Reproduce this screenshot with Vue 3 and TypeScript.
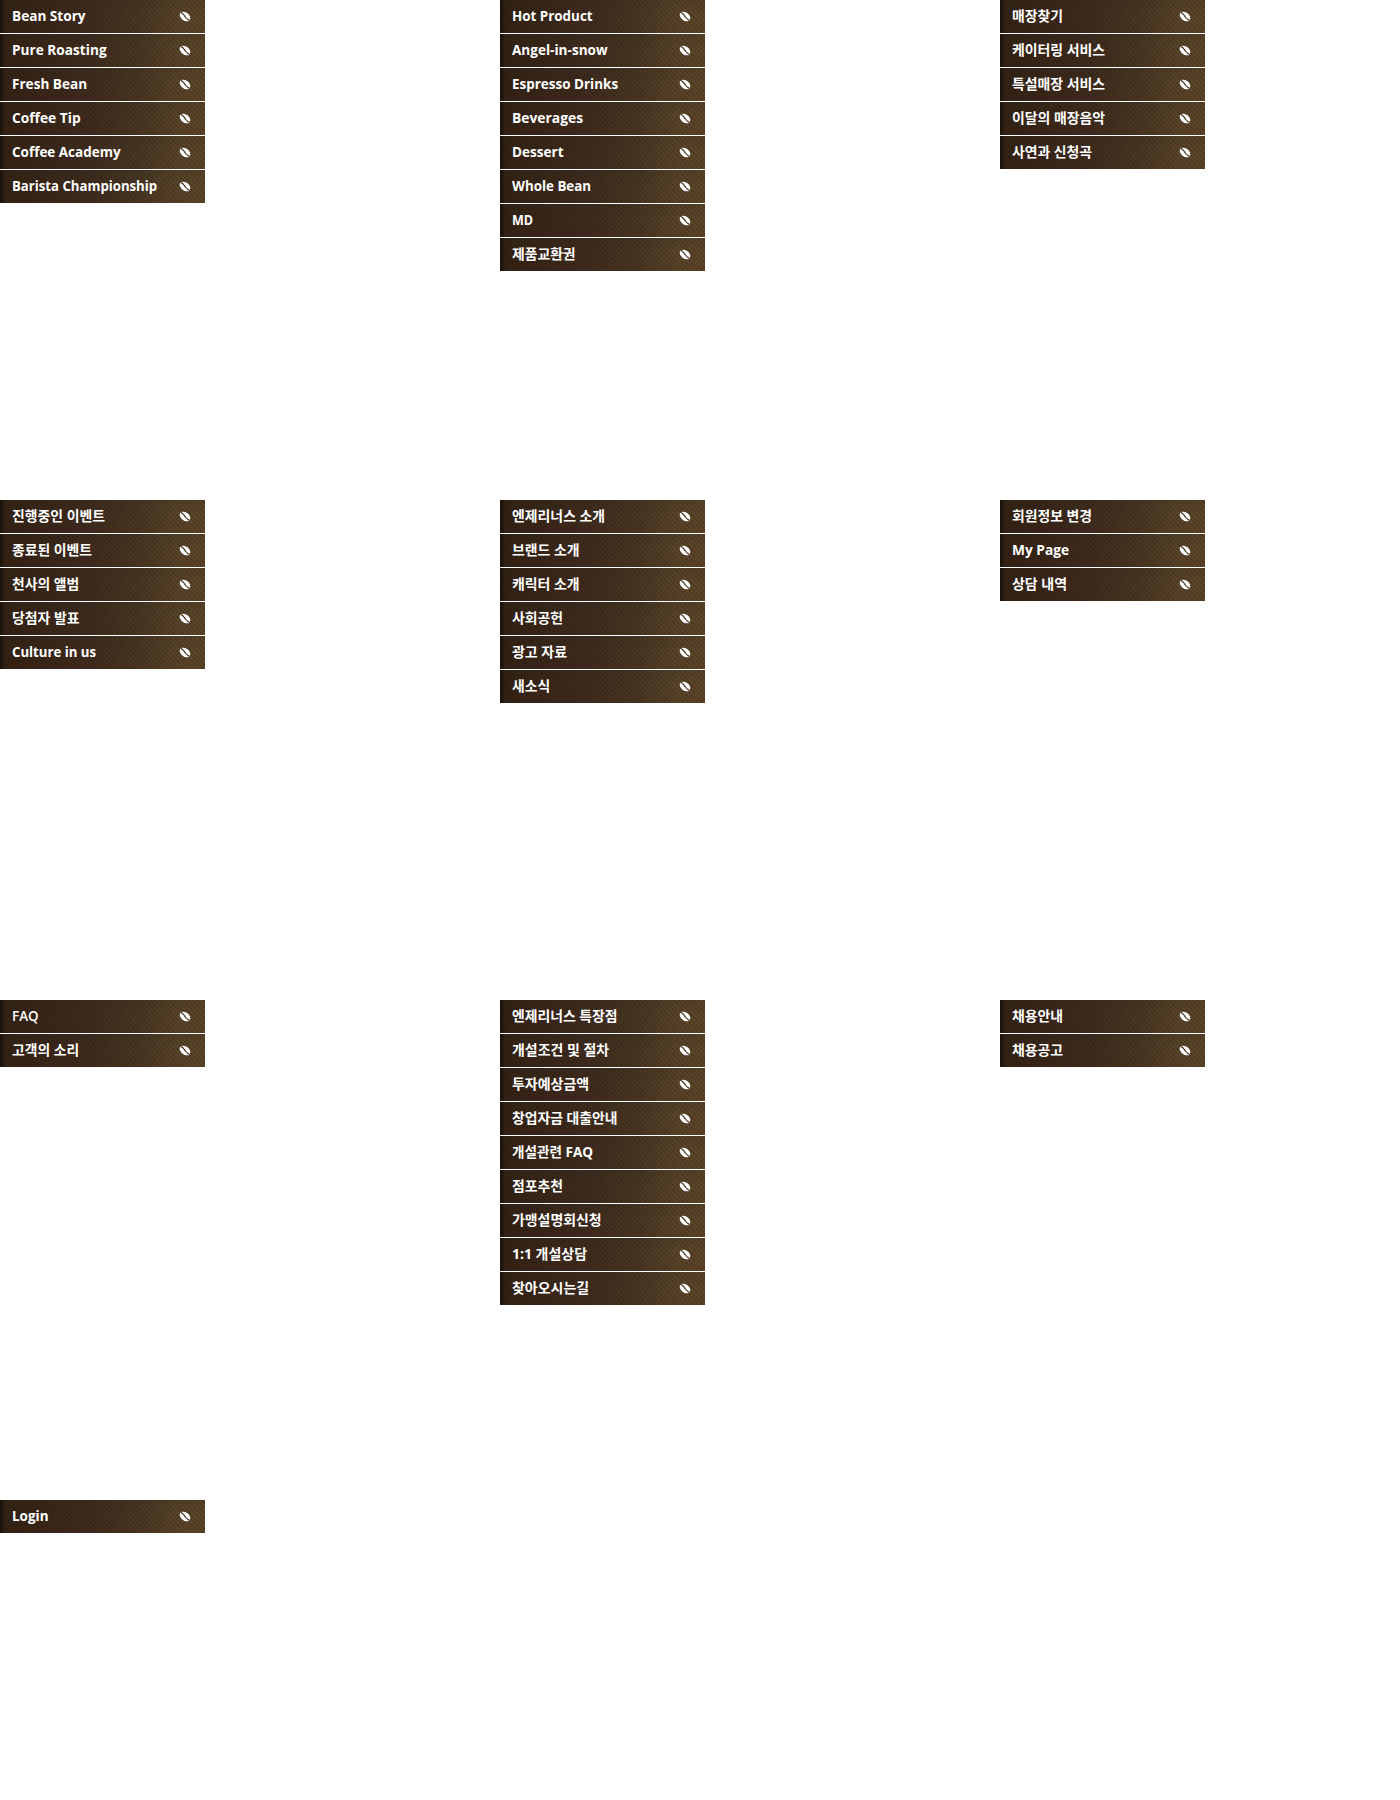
<script setup lang="ts">
interface Item {
  label: string
  width: number
}

const entry = (label: string, width: number): Item => ({ label, width })

const menus: Item[][] = [
  [
    entry('Bean Story', 73), entry('Pure Roasting', 94), entry('Fresh Bean', 74.5),
    entry('Coffee Tip', 68), entry('Coffee Academy', 108), entry('Barista Championship', 144.5),
  ],
  [
    entry('Hot Product', 80), entry('Angel-in-snow', 95), entry('Espresso Drinks', 105.5),
    entry('Beverages', 70.5), entry('Dessert', 51), entry('Whole Bean', 78.5),
    entry('MD', 20.5), entry('제품교환권', 63),
  ],
  [
    entry('매장찾기', 50.5), entry('케이터링 서비스', 92.5), entry('특설매장 서비스', 92.5),
    entry('이달의 매장음악', 92.5), entry('사연과 신청곡', 79.5),
  ],
  [
    entry('진행중인 이벤트', 92.5), entry('종료된 이벤트', 79.5), entry('천사의 앨범', 66.5),
    entry('당첨자 발표', 67), entry('Culture in us', 83.5),
  ],
  [
    entry('엔제리너스 소개', 92.5), entry('브랜드 소개', 67), entry('캐릭터 소개', 67),
    entry('사회공헌', 50.5), entry('광고 자료', 54.5), entry('새소식', 37.5),
  ],
  [entry('회원정보 변경', 79.5), entry('My Page', 56.5), entry('상담 내역', 54.5)],
  [entry('FAQ', 26), entry('고객의 소리', 66.5)],
  [
    entry('엔제리너스 특장점', 105), entry('개설조건 및 절차', 96.5), entry('투자예상금액', 76.5),
    entry('창업자금 대출안내', 105), entry('개설관련 FAQ', 80.5), entry('점포추천', 50.5),
    entry('가맹설명회신청', 89), entry('1:1 개설상담', 74.5), entry('찾아오시는길', 76.5),
  ],
  [entry('채용안내', 50.5), entry('채용공고', 50.5)],
  [entry('Login', 36)],
]

const face = (label: string) => {
  if (label === 'FAQ') return 'light'
  return /^[\x20-\x7e]+$/.test(label) ? 'latin' : 'hangul'
}
</script>

<template>
  <main class="board">
    <nav v-for="(menu, m) in menus" :key="m" class="cell">
      <ul class="menu">
        <li v-for="item in menu" :key="item.label" class="item">
          <svg class="label" width="160" height="33">
            <text
              x="0" y="21.3" :textLength="item.width + 0.6" lengthAdjust="spacingAndGlyphs"
              :class="face(item.label)"
            >{{ item.label }}</text>
          </svg>
          <svg class="bean" width="12" height="11" viewBox="0 0 12 11">
            <g transform="rotate(38 6 5.5)">
              <ellipse cx="6" cy="5.5" rx="5.9" ry="4" fill="#fff" />
              <path d="M0 5C3 4.1 4.2 5.1 6 5.5s3.2 1.1 6 .3" fill="none" stroke="#4b3822" stroke-width="1.2" />
            </g>
          </svg>
        </li>
      </ul>
    </nav>
  </main>
</template>

<style>
body {
  margin: 0;
  background: #fff;
}
</style>

<style scoped>
.board {
  display: grid;
  grid-template-columns: 500px 500px 400px;
  grid-auto-rows: 500px;
  height: 1800px;
  overflow: hidden;
}
.menu {
  display: flex;
  flex-direction: column;
  gap: 1px;
  width: 205px;
  margin: 0;
  padding: 0;
  list-style: none;
}
.item {
  display: flex;
  align-items: center;
  justify-content: space-between;
  box-sizing: border-box;
  height: 33px;
  padding: 0 14px 0 12px;
  background:
    repeating-linear-gradient(48deg, rgba(15, 10, 4, 0.16) 0 1px, transparent 1.6px 3.5px),
    repeating-linear-gradient(-48deg, rgba(15, 10, 4, 0.06) 0 1px, transparent 1.6px 3.5px),
    linear-gradient(90deg, rgba(10, 7, 2, 0.65), transparent 5px),
    linear-gradient(180deg, rgba(48, 44, 26, 0.16), transparent 45%, rgba(65, 28, 14, 0.08)),
    linear-gradient(98deg, #332213 0, #3b281a 25%, #402d1f 45%, #4a3824 68%, #5a452a 86%, #5f462a 100%);
}
.label {
  display: block;
  flex: none;
}
.label text {
  fill: #fff;
}
.latin {
  font: 700 14.4px "Open Sans", "Noto Sans", sans-serif;
}
.light {
  font: 600 14.4px "Open Sans", "Noto Sans", sans-serif;
}
.hangul {
  font: 700 13.5px "Open Sans", "Noto Sans CJK KR", sans-serif;
}
.bean {
  display: block;
  flex: none;
}
</style>
